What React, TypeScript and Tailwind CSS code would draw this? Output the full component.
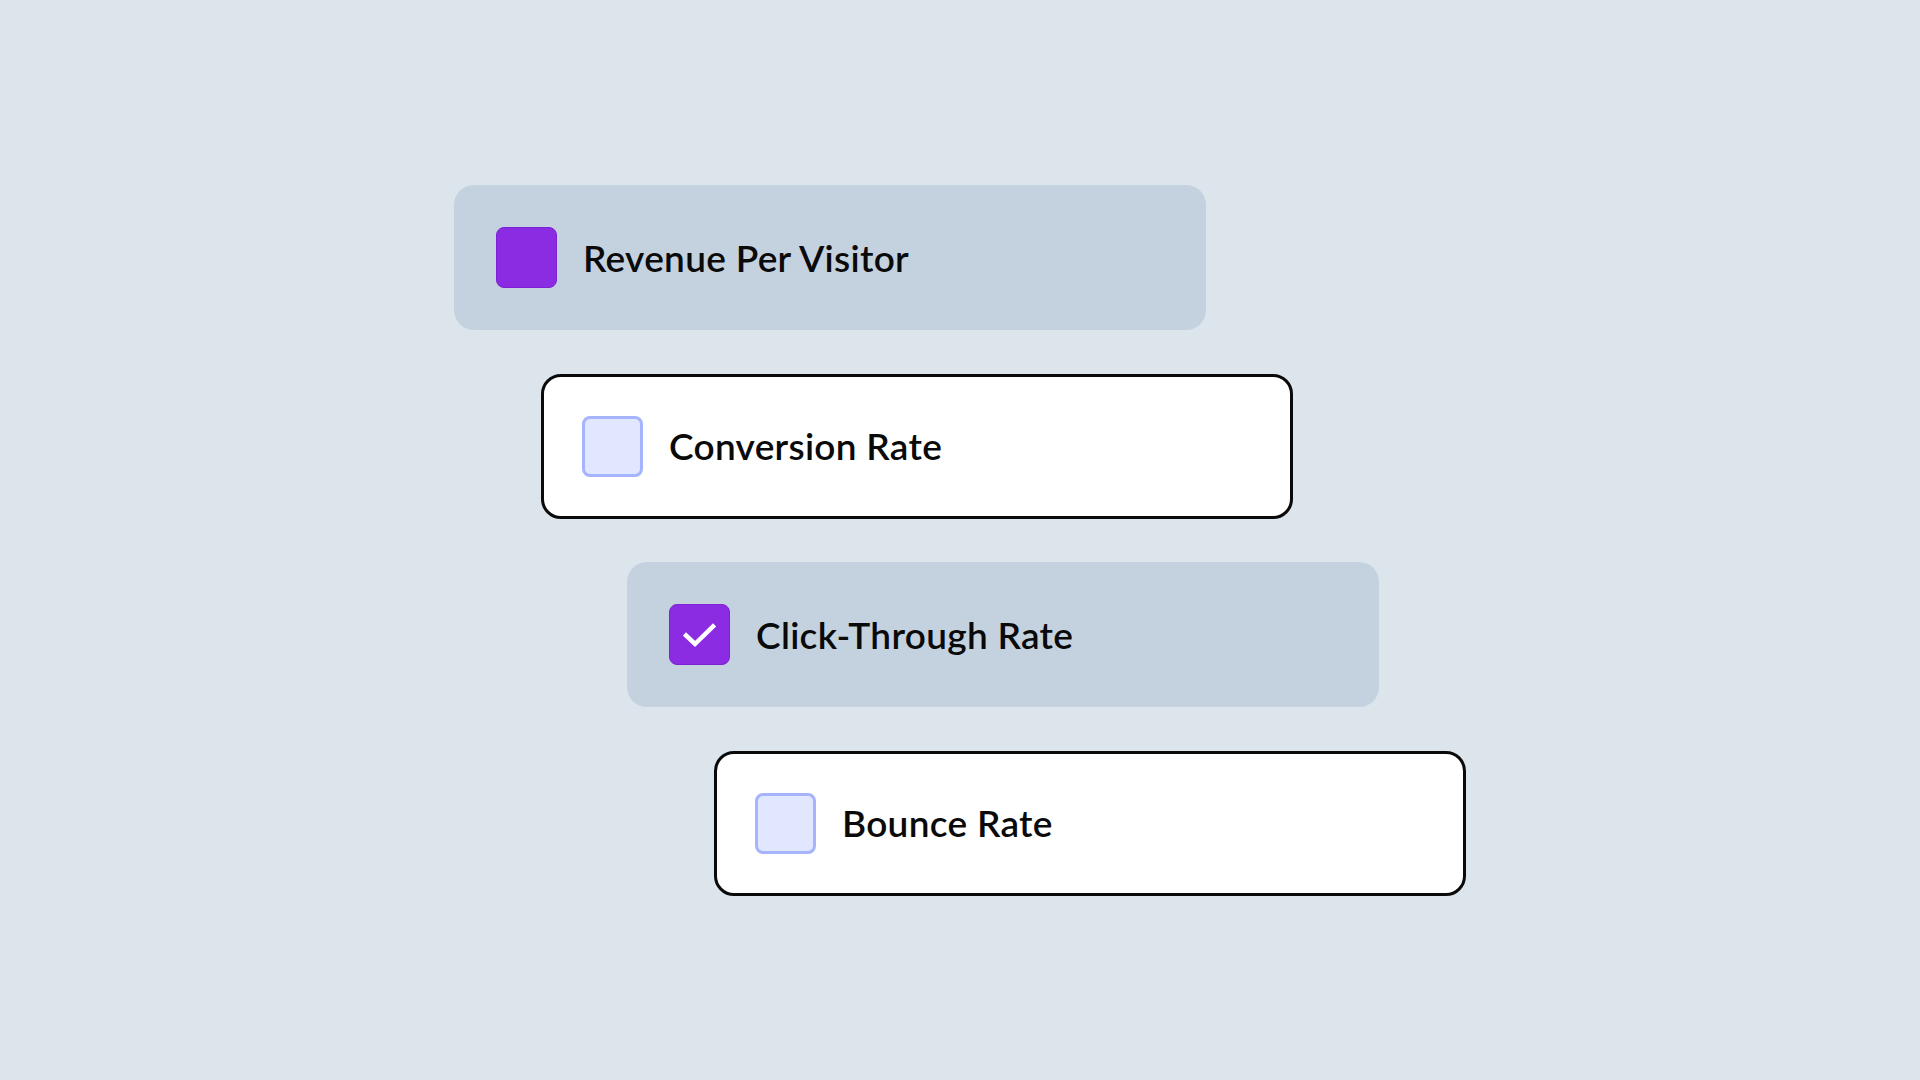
import React from "react";

type Item = { label: string; variant: "gray" | "white"; box: "filled" | "checked" | "empty"; ml: string };

const items: Item[] = [
  { label: "Revenue Per Visitor", variant: "gray", box: "filled", ml: "ml-0" },
  { label: "Conversion Rate", variant: "white", box: "empty", ml: "ml-[87px]" },
  { label: "Click-Through Rate", variant: "gray", box: "checked", ml: "ml-[173px]" },
  { label: "Bounce Rate", variant: "white", box: "empty", ml: "ml-[260px]" },
];

function Box({ kind }: { kind: Item["box"] }) {
  if (kind === "empty") {
    return <div className="w-[61px] h-[61px] shrink-0 rounded-[8px] bg-[#e0e7ff] border-[3px] border-[#a5b4fc]" />;
  }
  return (
    <div className="w-[61px] h-[61px] shrink-0 rounded-[8px] bg-[#8b2be2] border border-[#7c22d6] flex items-center justify-center">
      {kind === "checked" && (
        <svg width="34" height="26" viewBox="0 0 34 26" fill="none">
          <path d="M3 13.5 L12 22 L30 4.5" stroke="white" strokeWidth="4.5" strokeLinecap="square" strokeLinejoin="miter" />
        </svg>
      )}
    </div>
  );
}

export default function App() {
  return (
    <div className="w-[1920px] h-[1080px] bg-[#dce4ec] overflow-hidden" style={{ fontFamily: "Lato, 'Noto Sans', sans-serif" }}>
      <div className="pt-[185px] pl-[454px] flex flex-col gap-[43.5px]">
        {items.map((it) => (
          <div
            key={it.label}
            className={`${it.ml} w-[752px] h-[145px] rounded-[20px] flex items-center gap-[26px] ${
              it.variant === "gray" ? "bg-[#c4d2df] pl-[42px]" : "bg-white border-[3px] border-[#0a0a0a] pl-[38px]"
            }`}
          >
            <Box kind={it.box} />
            <span className="text-[37px] font-semibold text-[#0a0a0a] leading-none tracking-[0.3px] -mt-[1px]">{it.label}</span>
          </div>
        ))}
      </div>
    </div>
  );
}
